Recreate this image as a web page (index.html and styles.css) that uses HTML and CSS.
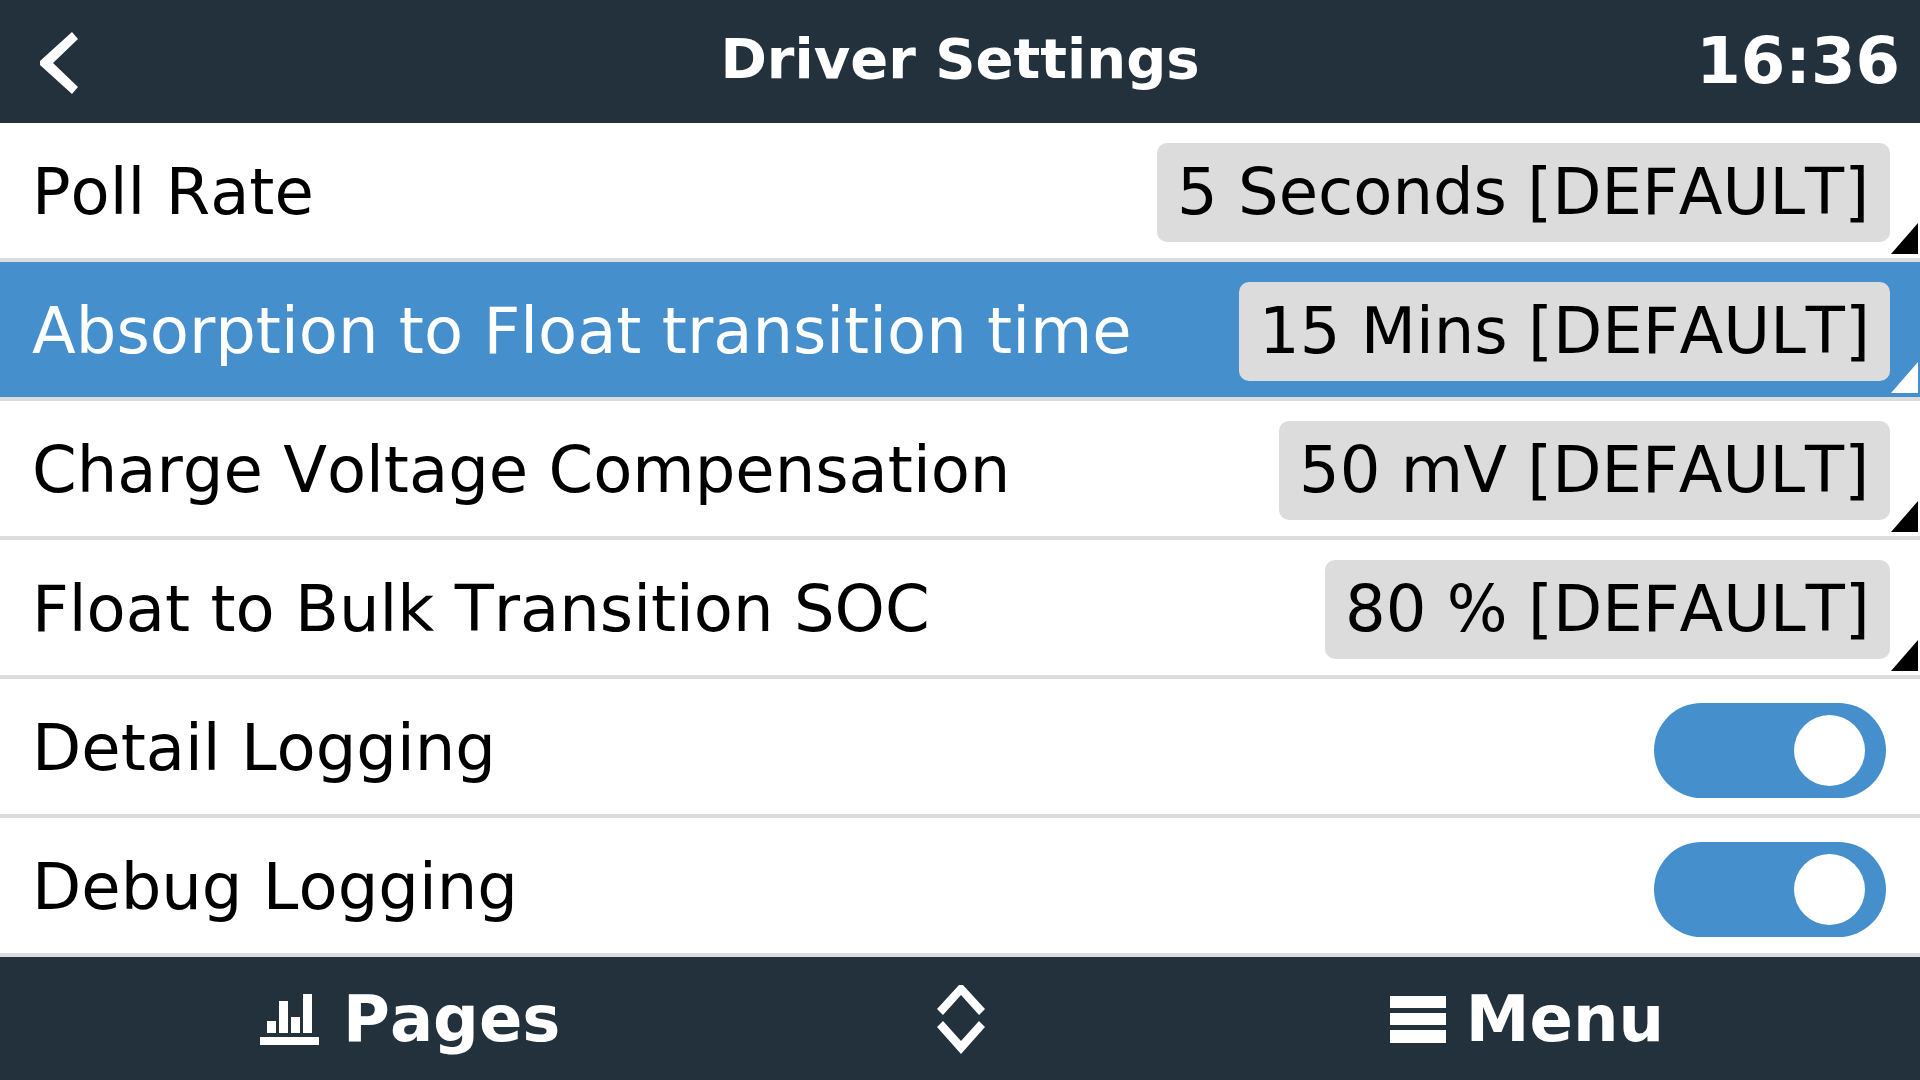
FILE: index.html
```html
<!DOCTYPE html>
<html lang="en">
<head>
<meta charset="utf-8">
<meta name="viewport" content="width=device-width, initial-scale=1">
<title>Driver Settings</title>
<link rel="stylesheet" href="styles.css">
</head>
<body>
<header class="bar header">
  <button class="bar-button back" type="button" aria-label="Back">
    <svg width="38" height="62" viewBox="0 0 38 62"><path d="M32 0L38 7L13 31L38 55L32 62L0 33V29Z" fill="currentColor"/></svg>
  </button>
  <h1 class="title">Driver Settings</h1>
  <time class="clock">16:36</time>
</header>
<main class="settings">
  <div class="row has-options">
    <label class="label" for="poll">Poll Rate</label>
    <select class="value" id="poll"><option>5 Seconds [DEFAULT]</option></select>
  </div>
  <div class="row has-options selected">
    <label class="label" for="absorption">Absorption to Float transition time</label>
    <select class="value" id="absorption"><option>15 Mins [DEFAULT]</option></select>
  </div>
  <div class="row has-options">
    <label class="label" for="compensation">Charge Voltage Compensation</label>
    <select class="value" id="compensation"><option>50 mV [DEFAULT]</option></select>
  </div>
  <div class="row has-options">
    <label class="label" for="soc">Float to Bulk Transition SOC</label>
    <select class="value" id="soc"><option>80 % [DEFAULT]</option></select>
  </div>
  <div class="row">
    <label class="label" for="detail">Detail Logging</label>
    <input class="toggle" id="detail" type="checkbox" checked>
  </div>
  <div class="row">
    <label class="label" for="debug">Debug Logging</label>
    <input class="toggle" id="debug" type="checkbox" checked>
  </div>
</main>
<footer class="bar footer">
  <button class="bar-button pages" type="button">
    <svg width="59" height="52" viewBox="0 0 59 52"><path d="M0 44H59V52H0ZM7 28H16V40H7ZM19 8H28V40H19ZM31 24H40V40H31ZM43 1H52V40H43Z" fill="currentColor"/></svg>
    Pages
  </button>
  <button class="bar-button" type="button" aria-label="Scroll">
    <svg width="50" height="70" viewBox="0 0 50 70"><path d="M22 1H26L48 25L42 31L24 11L6 31L0 25ZM6 37L24 57L42 37L48 43L24 70L0 43Z" fill="currentColor"/></svg>
  </button>
  <button class="bar-button menu" type="button">
    <svg width="56" height="48" viewBox="0 0 56 48"><path d="M0 1H56V13H0ZM0 18H56V30H0ZM0 35H56V48H0Z" fill="currentColor"/></svg>
    Menu
  </button>
</footer>
</body>
</html>
```
FILE: styles.css
```css
* {
  box-sizing: border-box;
}

body {
  margin: 0;
  min-height: 100vh;
  display: flex;
  flex-direction: column;
  background: #fff;
  color: #000;
  font-family: "DejaVu Sans", sans-serif;
  font-size: 64px;
  font-kerning: none;
  line-height: 76px;
}

.bar {
  display: grid;
  align-items: center;
  min-height: 123px;
  background: #22313b;
  color: #fff;
  font-weight: bold;
}

.header {
  grid-template-columns: 1fr auto 1fr;
  padding: 0 20px 2px;
}

.title {
  margin: 0;
  padding-bottom: 4px;
  font-size: 56px;
}

.clock {
  justify-self: end;
}

.bar-button {
  display: flex;
  align-items: center;
  padding: 0;
  border: 0;
  background: none;
  color: inherit;
  font: inherit;
  font-kerning: inherit;
}

.bar-button svg {
  display: block;
}

.back {
  justify-self: start;
  padding: 4px 20px 0;
}

.settings {
  flex: 1;
}

.row {
  position: relative;
  display: flex;
  align-items: center;
  justify-content: space-between;
  min-height: 139px;
  padding: 4px 30px 0 32px;
  border-bottom: 4px solid #dcdcdc;
}

.selected {
  background: #468fcd;
  color: #fff;
}

.label {
  padding-bottom: 2px;
}

.has-options::after {
  content: "";
  position: absolute;
  right: 2px;
  bottom: 4px;
  width: 27px;
  height: 31px;
  background: currentColor;
  clip-path: polygon(100% 0, 100% 100%, 0 100%);
}

.value {
  appearance: none;
  height: 99px;
  margin: 0;
  padding: 0 20px 2px;
  border: 0;
  border-radius: 10px;
  background: #dcdcdc;
  color: #000;
  font: inherit;
  font-kerning: none;
}

.toggle {
  appearance: none;
  display: flex;
  align-items: center;
  width: 232px;
  height: 95px;
  margin: 4px 4px 0 0;
  padding: 0 21px;
  border-radius: 48px;
  background: #dcdcdc;
}

.toggle::before {
  content: "";
  width: 71px;
  height: 71px;
  border-radius: 50%;
  background: #fff;
}

.toggle:checked {
  justify-content: flex-end;
  background: #468fcd;
}

.footer {
  grid-template-columns: 1fr auto 1fr;
  padding: 0 256px 0 260px;
}

.pages {
  justify-self: start;
  gap: 24px;
}

.menu {
  justify-self: end;
  gap: 20px;
}
```
